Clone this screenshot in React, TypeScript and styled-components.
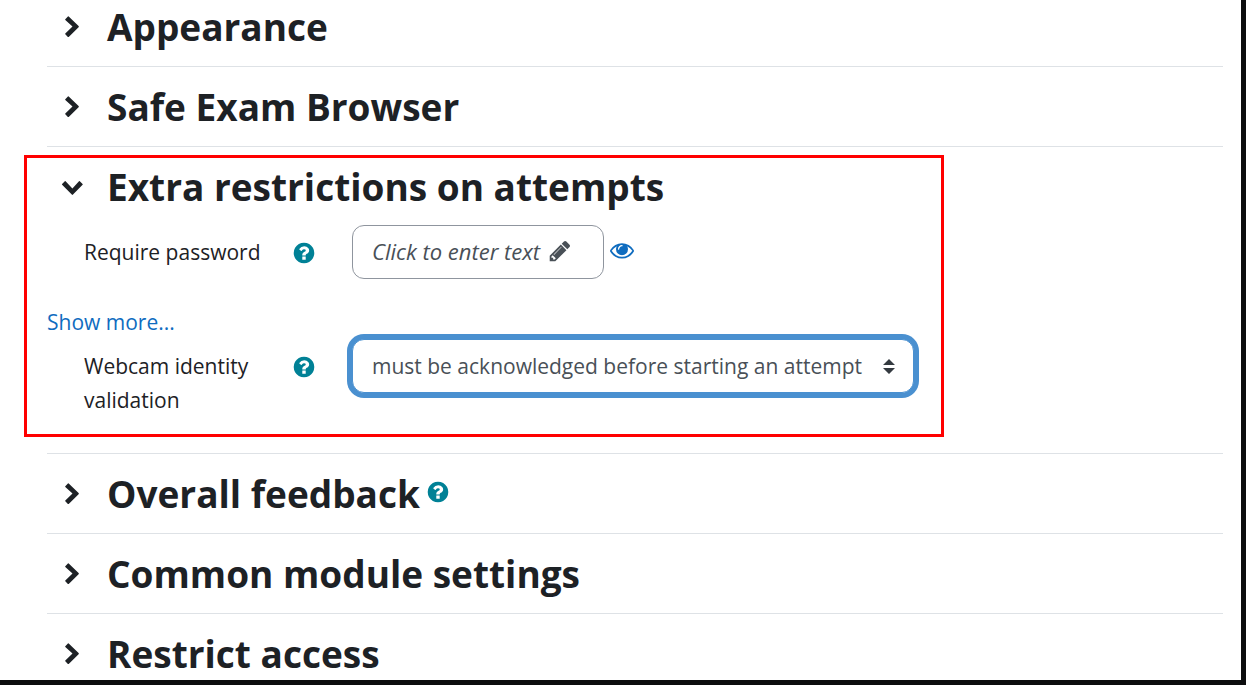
import React from "react";
import styled, { createGlobalStyle, css } from "styled-components";

const GlobalStyle = createGlobalStyle`
  *, *::before, *::after { box-sizing: border-box; }
  body {
    margin: 0;
    background: #fff;
    color: #1d2125;
    font-family: "Open Sans", "Noto Sans", sans-serif;
    font-size: 21px;
    line-height: 34px;
  }
`;

const Page = styled.main`
  min-height: 100vh;
  padding: 3px 18px 0 47px;
  border: solid #0c0d0e;
  border-width: 0 5px 5px 0;
`;

const SectionBox = styled.section`
  position: relative;
  padding-bottom: 15px;
  border-bottom: 1px solid #dee2e6;

  & + & {
    padding-top: 16px;
  }

  &:last-child {
    padding-bottom: 0;
    border-bottom: 0;
  }
`;

const Header = styled.div`
  display: flex;
  align-items: center;
  height: 48px;
  padding-left: 13px;
`;

const plainButton = css`
  display: flex;
  align-items: center;
  justify-content: center;
  padding: 0;
  border: 0;
  background: none;
  cursor: pointer;
`;

const Toggle = styled.button`
  ${plainButton}
  width: 24px;
  height: 24px;
  margin-right: 23px;
  color: #1d2125;
`;

const Title = styled.h3`
  margin: 0;
  font-size: 37px;
  font-weight: 700;
  line-height: 48px;
  white-space: nowrap;
`;

const IconButton = styled.button<{ $tone: "help" | "link" }>`
  ${plainButton}
  width: 24px;
  height: 24px;
  color: ${(p) => (p.$tone === "help" ? "#008196" : "#0f6cbf")};
`;

const TitleHelp = styled.span`
  margin: 0 0 4px 6px;
`;

const Fields = styled.div`
  padding: 14px 0 21px;
`;

const Row = styled.div`
  display: grid;
  grid-template-columns: 208px 60px 1fr;
  padding-left: 37px;
`;

const Label = styled.label`
  max-width: 190px;
  padding-top: 10px;
`;

const HelpCell = styled.div`
  padding-top: 16px;
`;

const Control = styled.div`
  display: flex;
  align-items: flex-start;
`;

const EditButton = styled.button`
  display: flex;
  align-items: center;
  gap: 8px;
  width: 252px;
  height: 54px;
  margin-right: 6px;
  padding: 0 19px 2px;
  border: 1px solid #8f959e;
  border-radius: 12px;
  background: #fff;
  color: #495057;
  font: inherit;
  font-size: 22px;
  font-style: italic;
  white-space: nowrap;
  cursor: pointer;
`;

const Reveal = styled.div`
  padding-top: 13px;
`;

const MoreLink = styled.a`
  display: block;
  width: fit-content;
  margin-top: 26px;
  color: #0f6cbf;
  text-decoration: none;
`;

const SelectWrap = styled.div`
  position: relative;
  width: 562px;
  max-width: 100%;

  svg {
    position: absolute;
    top: 20px;
    right: 19px;
    color: #343a40;
    pointer-events: none;
  }
`;

const Select = styled.select`
  appearance: none;
  display: block;
  width: 100%;
  height: 54px;
  padding: 0 36px 0 19px;
  border: 1px solid #4a90d0;
  border-radius: 12px;
  outline: 0;
  box-shadow: 0 0 0 5px #4a90d0;
  background: #fff;
  color: #495057;
  font: inherit;
`;

const Highlight = styled.div`
  position: absolute;
  top: 8px;
  bottom: 16px;
  left: -23px;
  width: 920px;
  border: 3px solid #ff0000;
  pointer-events: none;
`;

const Chevron = ({ open = false }: { open?: boolean }) => (
  <svg width="24" height="24" viewBox="0 0 24 24" fill="currentColor" aria-hidden="true">
    <path
      transform={open ? "translate(0 1) rotate(90 12 12)" : undefined}
      d="M5.3 4.2 7.9 1.4q.4-.4.8 0L18.6 11q.6.6 0 1.2L8.7 21.900q-.4.4-.8 0L5.300 19.200q-.4-.4 0-.8L12.500 11.600 5.300 5q-.4-.4 0-.8z"
    />
  </svg>
);

const Glyph = ({ d }: { d: string }) => (
  <svg width="24" height="24" viewBox="0 0 1792 1792" fill="currentColor" aria-hidden="true">
    <path d={d} />
  </svg>
);

const QUESTION =
  "M1024 1376v-192q0-14-9-23t-23-9h-192q-14 0-23 9t-9 23v192q0 14 9 23t23 9h192q14 0 23-9t9-23zm256-672q0-88-55.5-163t-138.5-116-170-41q-243 0-371 213-15 24 8 42l132 100q7 6 19 6 16 0 25-12 53-68 86-92 34-24 86-24 48 0 85.5 26t37.5 59q0 38-20 61t-68 45q-63 28-115.5 86.5t-52.5 125.5v36q0 14 9 23t23 9h192q14 0 23-9t9-23q0-19 21.5-49.5t54.5-49.5q32-18 49-28.5t46-35 44.5-48 28-60.5 12.5-81zm384 192q0 209-103 385.5t-279.5 279.5-385.5 103-385.5-103-279.5-279.5-103-385.5 103-385.5 279.5-279.5 385.5-103 385.5 103 279.5 279.5 103 385.5z";
const PENCIL =
  "M491 1536l91-91-235-235-91 91v107h128v128h107zm523-928q0-22-22-22-10 0-17 7l-542 542q-7 7-7 17 0 22 22 22 10 0 17-7l542-542q7-7 7-17zm-54-192l416 416-832 832h-416v-416zm683 96q0 53-37 90l-166 166-416-416 166-165q36-38 90-38 53 0 91 38l235 234q37 39 37 91z";
const EYE =
  "M1664 960q-152-236-381-353 61 104 61 225 0 185-131.5 316.5t-316.5 131.5-316.5-131.5-131.5-316.5q0-121 61-225-229 117-381 353 133 205 333.5 326.5t434.5 121.5 434.5-121.5 333.5-326.5zm-720-384q0-20-14-34t-34-14q-125 0-214.5 89.5t-89.5 214.5q0 20 14 34t34 14 34-14 14-34q0-86 61-147t147-61q20 0 34-14t14-34zm848 384q0 34-20 69-140 230-376.5 368.5t-499.5 138.5-499.5-139-376.5-368q-20-35-20-69t20-69q140-229 376.5-368t499.5-139 499.5 139 376.5 368q20 35 20 69z";

const Help = ({ topic }: { topic: string }) => (
  <IconButton type="button" $tone="help" aria-label={`Help with ${topic}`}>
    <Glyph d={QUESTION} />
  </IconButton>
);

type SectionProps = {
  title: string;
  open?: boolean;
  help?: boolean;
  children?: React.ReactNode;
};

const Section = ({ title, open = false, help = false, children }: SectionProps) => (
  <SectionBox>
    <Header>
      <Toggle type="button" aria-expanded={open} aria-label={title}>
        <Chevron open={open} />
      </Toggle>
      <Title>{title}</Title>
      {help && (
        <TitleHelp>
          <Help topic={title} />
        </TitleHelp>
      )}
    </Header>
    {children}
  </SectionBox>
);

export default function App() {
  return (
    <>
      <GlobalStyle />
      <Page>
        <Section title="Appearance" />
        <Section title="Safe Exam Browser" />
        <Section title="Extra restrictions on attempts" open>
          <Fields>
            <Row>
              <Label htmlFor="password">Require password</Label>
              <HelpCell>
                <Help topic="Require password" />
              </HelpCell>
              <Control>
                <EditButton id="password" type="button">
                  Click to enter text
                  <Glyph d={PENCIL} />
                </EditButton>
                <Reveal>
                  <IconButton type="button" $tone="link" aria-label="Reveal password">
                    <Glyph d={EYE} />
                  </IconButton>
                </Reveal>
              </Control>
            </Row>
            <MoreLink href="#more">Show more...</MoreLink>
            <Row>
              <Label htmlFor="webcam">Webcam identity validation</Label>
              <HelpCell>
                <Help topic="Webcam identity validation" />
              </HelpCell>
              <SelectWrap>
                <Select id="webcam" defaultValue="required">
                  <option value="required">must be acknowledged before starting an attempt</option>
                  <option value="none">not required</option>
                </Select>
                <svg width="12" height="15" viewBox="0 0 12 15" fill="currentColor" aria-hidden="true">
                  <path d="M6 0l6 6H0zM0 9h12l-6 6z" />
                </svg>
              </SelectWrap>
            </Row>
          </Fields>
          <Highlight />
        </Section>
        <Section title="Overall feedback" help />
        <Section title="Common module settings" />
        <Section title="Restrict access" />
      </Page>
    </>
  );
}
